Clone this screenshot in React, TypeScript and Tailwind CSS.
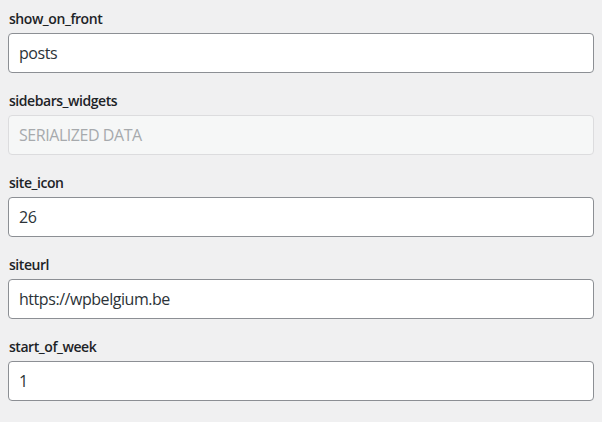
const fields = [
  { name: "show_on_front", value: "posts" },
  { name: "sidebars_widgets", value: "SERIALIZED DATA", disabled: true },
  { name: "site_icon", value: "26" },
  { name: "siteurl", value: "https://wpbelgium.be" },
  { name: "start_of_week", value: "1" },
];

const App = () => {
  return (
    <div
      className="min-h-[422px] bg-[#f0f0f1] px-2 pt-[9px]"
      style={{ fontFamily: '"Open Sans", "Noto Sans", sans-serif' }}
    >
      {fields.map((f) => (
        <div key={f.name} className="pb-[18px]">
          <label className="block h-5 pl-[1px] text-[14px] leading-5 font-semibold tracking-[-0.45px] text-[#1d2327]">
            {f.name}
          </label>
          <div
            className={
              f.disabled
                ? "mt-1 flex h-10 w-[586px] items-center rounded-[4px] border border-[#dcdcde] bg-[#f6f7f7] px-[10px] text-[16px] tracking-[-0.45px] text-[#a7aaad]"
                : "mt-1 flex h-10 w-[586px] items-center rounded-[4px] border border-[#8c8f94] bg-white px-[10px] text-[16px] tracking-[-0.45px] text-[#2c3338]"
            }
          >
            {f.value}
          </div>
        </div>
      ))}
    </div>
  );
};

export default App;
